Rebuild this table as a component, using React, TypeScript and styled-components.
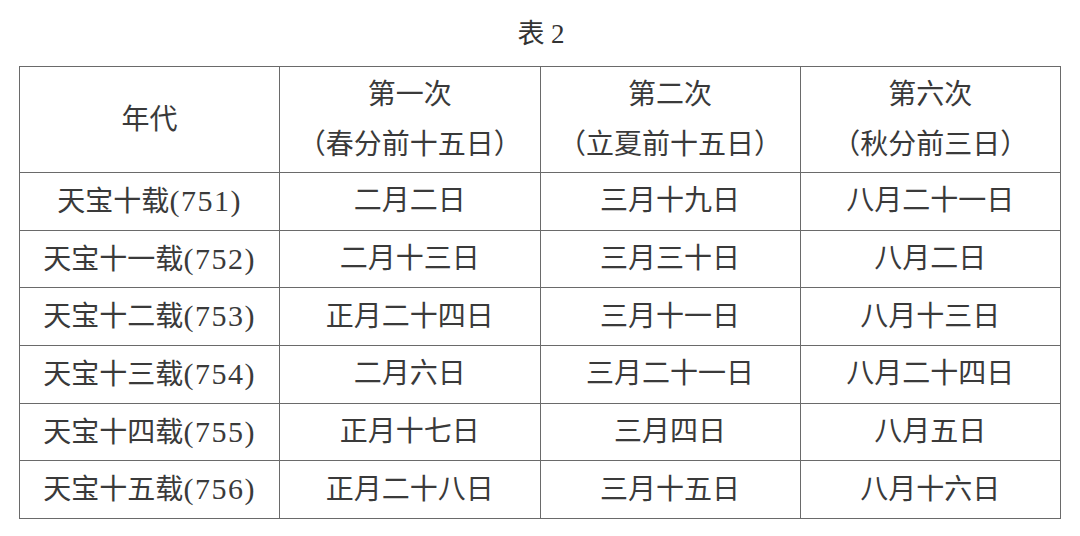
import * as React from 'react';
import styled, { createGlobalStyle } from 'styled-components';

const GlobalStyle = createGlobalStyle`
  html, body {
    margin: 0;
    padding: 0;
    background: #fff;
  }
  body {
    font-family: "Liberation Serif", "Noto Sans CJK SC", serif;
    color: #3a3a3a;
  }
`;

const Page = styled.div`
  width: 1080px;
  height: 536px;
  padding: 0 19px;
  box-sizing: border-box;
`;

const Title = styled.div`
  height: 66px;
  padding-bottom: 4px;
  box-sizing: border-box;
  display: flex;
  align-items: center;
  justify-content: center;
  font-size: 27px;
  padding-left: 2px;
  color: #333;
`;

const Table = styled.table`
  width: 1042px;
  border-collapse: collapse;
  table-layout: fixed;
`;

const Cell = styled.td<{ $head?: boolean }>`
  border: 1.5px solid #6a6a6a;
  text-align: center;
  vertical-align: middle;
  font-size: 28px;
  line-height: 50px;
  height: ${({ $head }) => ($head ? '105px' : '56.7px')};
  padding: 0;
  color: #3a3a3a;
  white-space: nowrap;
`;

const Num = styled.span`
  font-size: 30px;
  letter-spacing: 1.5px;
`;

const HEAD = [
  ['第一次', '（春分前十五日）'],
  ['第二次', '（立夏前十五日）'],
  ['第六次', '（秋分前三日）'],
];

const ROWS = [
  ['天宝十载', '751', '二月二日', '三月十九日', '八月二十一日'],
  ['天宝十一载', '752', '二月十三日', '三月三十日', '八月二日'],
  ['天宝十二载', '753', '正月二十四日', '三月十一日', '八月十三日'],
  ['天宝十三载', '754', '二月六日', '三月二十一日', '八月二十四日'],
  ['天宝十四载', '755', '正月十七日', '三月四日', '八月五日'],
  ['天宝十五载', '756', '正月二十八日', '三月十五日', '八月十六日'],
];

const App = () => (
  <>
    <GlobalStyle />
    <Page>
      <Title>表 2</Title>
      <Table>
        <tbody>
          <tr>
            <Cell $head>年代</Cell>
            {HEAD.map(([a, b], i) => (
              <Cell $head key={`head_${i}`}>
                {a}
                <br />
                {b}
              </Cell>
            ))}
          </tr>
          {ROWS.map(([era, year, ...dates], i) => (
            <tr key={`row_${i}`}>
              <Cell>
                {era}
                <Num>({year})</Num>
              </Cell>
              {dates.map((text, j) => (
                <Cell key={`cell_${i}_${j}`}>{text}</Cell>
              ))}
            </tr>
          ))}
        </tbody>
      </Table>
    </Page>
  </>
);

export default App;
